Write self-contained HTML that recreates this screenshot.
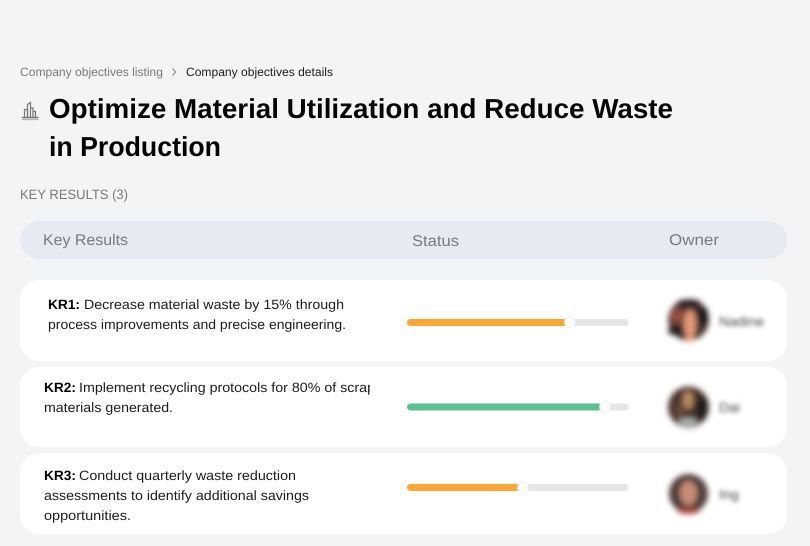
<!DOCTYPE html>
<html lang="en">
<head>
<meta charset="utf-8">
<title>Company objectives details</title>
<style>
html,body{margin:0;padding:0;width:810px;height:546px;overflow:hidden;background:#f3f4f6}
svg{display:block}
text{font-family:"Liberation Sans",sans-serif;text-rendering:geometricPrecision}
.b{font-size:12px}
.h{font-size:15.5px;fill:#777a7e}
.t{font-size:13.5px;fill:#1d1d1f}
.k{font-weight:700;fill:#000}
.n{font-size:13.5px;fill:#444;filter:url(#bl2)}
</style>
</head>
<body>
<svg width="810" height="546" viewBox="0 0 810 546" xmlns="http://www.w3.org/2000/svg">
<defs>
<filter id="bl2" x="-30%" y="-60%" width="160%" height="220%"><feGaussianBlur stdDeviation="2"/></filter>
<filter id="bl3" x="-30%" y="-30%" width="160%" height="160%"><feGaussianBlur stdDeviation="3"/></filter>
<clipPath id="c2"><rect x="40" y="375" width="330" height="45"/></clipPath>
</defs>
<rect width="810" height="546" fill="#f3f4f6"/>

<text class="b" x="20" y="76" fill="#77797d" textLength="143" lengthAdjust="spacingAndGlyphs">Company objectives listing</text>
<path d="M172.500 68.500l3.200 3.500-3.200 3.500" fill="none" stroke="#808080" stroke-width="1"/>
<text class="b" x="186" y="76" fill="#1c1c1e" textLength="147" lengthAdjust="spacingAndGlyphs">Company objectives details</text>

<g fill="none" stroke="#777" stroke-width="1.200">
<path d="M22 117.500h16.500" stroke-width="1.400"/>
<path d="M24.500 117v-7.500h3v7.500"/>
<path d="M27.500 117v-12.500l3-2v14.500"/>
<path d="M30.500 108h2.500v9"/>
<path d="M33 111.500h2.500v5.500"/>
<path d="M22 119.500h16.500" stroke="#b5b5b5"/>
</g>

<text x="49" y="118" font-size="27.500" font-weight="700" fill="#050505" textLength="624" lengthAdjust="spacingAndGlyphs">Optimize Material Utilization and Reduce Waste</text>
<text x="49" y="156" font-size="27.500" font-weight="700" fill="#050505" textLength="172" lengthAdjust="spacingAndGlyphs">in Production</text>

<text x="20" y="199" font-size="13.500" fill="#77797d" textLength="108" lengthAdjust="spacingAndGlyphs">KEY RESULTS (3)</text>

<rect x="20" y="221" width="767" height="38" rx="19" fill="#e6eaf2"/>
<text class="h" x="43" y="245" textLength="85" lengthAdjust="spacingAndGlyphs">Key Results</text>
<text class="h" x="412" y="246" textLength="47" lengthAdjust="spacingAndGlyphs">Status</text>
<text class="h" x="669" y="245" textLength="50" lengthAdjust="spacingAndGlyphs">Owner</text>

<rect x="20" y="280" width="767" height="81" rx="19" fill="#fff"/>
<rect x="20" y="367" width="767" height="80" rx="19" fill="#fff"/>
<rect x="20" y="453" width="767" height="81" rx="19" fill="#fff"/>

<text class="t k" x="48" y="309" textLength="32" lengthAdjust="spacingAndGlyphs">KR1:</text>
<text class="t" x="84" y="309" textLength="260" lengthAdjust="spacingAndGlyphs">Decrease material waste by 15% through</text>
<text class="t" x="48" y="329" textLength="298" lengthAdjust="spacingAndGlyphs">process improvements and precise engineering.</text>

<g clip-path="url(#c2)">
<text class="t k" x="44" y="392" textLength="32" lengthAdjust="spacingAndGlyphs">KR2:</text>
<text class="t" x="79" y="392" textLength="296" lengthAdjust="spacingAndGlyphs">Implement recycling protocols for 80% of scrap</text>
</g>
<text class="t" x="44" y="412" textLength="129" lengthAdjust="spacingAndGlyphs">materials generated.</text>

<text class="t k" x="44" y="480" textLength="32" lengthAdjust="spacingAndGlyphs">KR3:</text>
<text class="t" x="79" y="480" textLength="217" lengthAdjust="spacingAndGlyphs">Conduct quarterly waste reduction</text>
<text class="t" x="44" y="500" textLength="265" lengthAdjust="spacingAndGlyphs">assessments to identify additional savings</text>
<text class="t" x="44" y="520" textLength="87" lengthAdjust="spacingAndGlyphs">opportunities.</text>

<rect x="407" y="319" width="221.500" height="7" rx="3.500" fill="#e6e6e6"/>
<rect x="407" y="319" width="163" height="7" rx="3.500" fill="#ffa633"/>
<circle cx="570" cy="322.500" r="5.500" fill="#fff" stroke="#ececec" stroke-width="0.800"/>

<rect x="407" y="403.500" width="221.500" height="7" rx="3.500" fill="#e6e6e6"/>
<rect x="407" y="403.500" width="198" height="7" rx="3.500" fill="#57c48f"/>
<circle cx="605" cy="407" r="5.500" fill="#fff" stroke="#ececec" stroke-width="0.800"/>

<rect x="407" y="484" width="221.500" height="7" rx="3.500" fill="#e6e6e6"/>
<rect x="407" y="484" width="116" height="7" rx="3.500" fill="#ffa633"/>
<circle cx="523" cy="487.500" r="5.500" fill="#fff" stroke="#ececec" stroke-width="0.800"/>

<g filter="url(#bl3)">
<circle cx="688.500" cy="320" r="20.500" fill="#4a3430"/>
<ellipse cx="690" cy="324" rx="6" ry="14" fill="#e39a78"/>
<ellipse cx="677" cy="316" rx="7" ry="7" fill="#96503f"/>
<ellipse cx="675" cy="331" rx="7" ry="4" fill="#151315"/>
<ellipse cx="703" cy="316" rx="5" ry="10" fill="#1c1719"/>
<ellipse cx="689" cy="303" rx="12" ry="3.500" fill="#1f181a"/>
<ellipse cx="690" cy="339" rx="3.500" ry="3.500" fill="#f4a585"/>
</g>

<g filter="url(#bl3)">
<circle cx="688.500" cy="407" r="20.500" fill="#4b352d"/>
<ellipse cx="688" cy="400" rx="5" ry="9" fill="#b98a63"/>
<ellipse cx="680" cy="412" rx="4" ry="9" fill="#6b4a38"/>
<ellipse cx="702" cy="408" rx="6" ry="12" fill="#241a1a"/>
<ellipse cx="688" cy="422" rx="9" ry="4" fill="#a6b0ab"/>
</g>

<g filter="url(#bl3)">
<circle cx="688.500" cy="493.500" r="19.500" fill="#4f3d3a"/>
<ellipse cx="688.500" cy="493" rx="8.500" ry="12" fill="#c98b78"/>
<ellipse cx="688.500" cy="511" rx="11" ry="3" fill="#b04a3c"/>
</g>

<text class="n" x="719" y="326" textLength="45" lengthAdjust="spacingAndGlyphs">Nadine</text>
<text class="n" x="719" y="412" textLength="21" lengthAdjust="spacingAndGlyphs">Dai</text>
<text class="n" x="719" y="499" textLength="20" lengthAdjust="spacingAndGlyphs">Ing</text>
</svg>
</body>
</html>
